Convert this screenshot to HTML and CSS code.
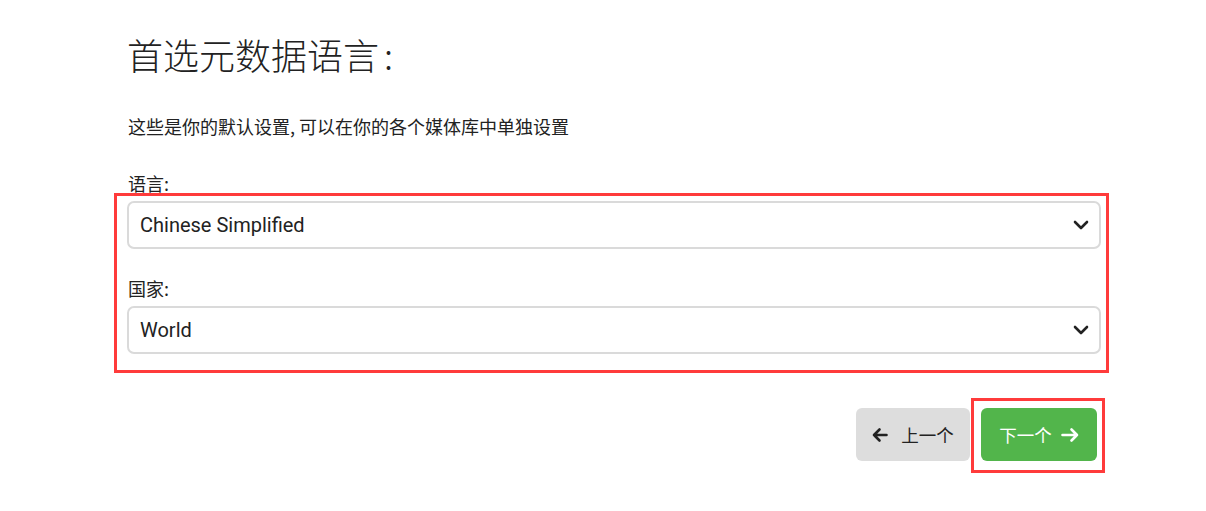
FILE: index.html
```html
<!DOCTYPE html>
<html lang="zh-CN">
<head>
<meta charset="utf-8">
<title>首选元数据语言</title>
<link rel="stylesheet" href="styles.css">
</head>
<body>
<div class="page">
  <h1 class="title">首选元数据语言<span class="colon">:</span></h1>
  <p class="desc">这些是你的默认设置, 可以在你的各个媒体库中单独设置</p>
  <label class="label">语言:</label>
  <div class="mark-box">
    <div class="select">
      <span class="select-text">Chinese Simplified</span>
      <svg class="chev" width="16" height="10" viewBox="0 0 16 10"><path d="M2 2 L8 8 L14 2" fill="none" stroke="#222" stroke-width="2.6" stroke-linecap="round" stroke-linejoin="round"/></svg>
    </div>
    <label class="label label-inner">国家:</label>
    <div class="select">
      <span class="select-text">World</span>
      <svg class="chev" width="16" height="10" viewBox="0 0 16 10"><path d="M2 2 L8 8 L14 2" fill="none" stroke="#222" stroke-width="2.6" stroke-linecap="round" stroke-linejoin="round"/></svg>
    </div>
  </div>
  <div class="actions">
    <button class="btn btn-prev">
      <svg width="16" height="16" viewBox="0 0 16 16"><path d="M14.5 8 H2 M7.5 2.5 L2 8 L7.5 13.5" fill="none" stroke="#222" stroke-width="2.6" stroke-linecap="round" stroke-linejoin="round"/></svg>
      <span>上一个</span>
    </button>
    <div class="mark-btn">
      <button class="btn btn-next">
        <span>下一个</span>
        <svg width="18" height="16" viewBox="0 0 18 16"><path d="M1.5 8 H16 M10.5 2.5 L16 8 L10.5 13.5" fill="none" stroke="#fff" stroke-width="2.6" stroke-linecap="round" stroke-linejoin="round"/></svg>
      </button>
    </div>
  </div>
</div>
</body>
</html>
```

FILE: styles.css
```css
html, body {
  margin: 0;
  padding: 0;
  background: #fff;
}
body {
  font-family: "Noto Sans CJK SC", "Noto Sans", sans-serif;
  color: #222;
}
.page {
  width: 974px;
  margin-left: 127px;
  padding-top: 26px;
}
.title {
  margin: 0;
  font-size: 36px;
  font-weight: 300;
  line-height: 56px;
  color: #222;
}
.colon {
  margin-left: 5px;
}
.desc {
  margin: 32px 0 0 1px;
  font-size: 18px;
  line-height: 24px;
}
.label {
  display: block;
  margin: 35px 0 0 1px;
  font-size: 18px;
  line-height: 20px;
}
.mark-box {
  margin: 0 -8px 0 -13px;
  border: 3px solid #ff3b3b;
  padding: 5px 5px 16px 10px;
}
.label-inner {
  margin: 29px 0 8px 1px;
}
.select {
  height: 44px;
  border: 2px solid #dadada;
  border-radius: 7px;
  display: flex;
  align-items: center;
  justify-content: space-between;
  padding: 0 10px 0 11px;
}
.select-text {
  font-family: Roboto, "Noto Sans", sans-serif;
  font-size: 20px;
  color: #222;
}
.actions {
  display: flex;
  justify-content: flex-end;
  align-items: flex-start;
  margin-top: 25px;
  margin-right: -4px;
}
.btn {
  border: 0;
  border-radius: 6px;
  height: 53px;
  padding: 0;
  font-family: "Noto Sans CJK SC", "Noto Sans", sans-serif;
  font-size: 17.5px;
  display: flex;
  align-items: center;
  justify-content: center;
}
.btn-prev {
  width: 114px;
  gap: 13px;
  background: #dddddd;
  color: #222;
  margin-top: 10px;
  margin-right: 1px;
}
.mark-btn {
  border: 3px solid #ff3b3b;
  padding: 7px 5px 9px 7px;
}
.btn-next {
  width: 116px;
  gap: 9px;
  background: #52b54b;
  color: #fff;
}
```
